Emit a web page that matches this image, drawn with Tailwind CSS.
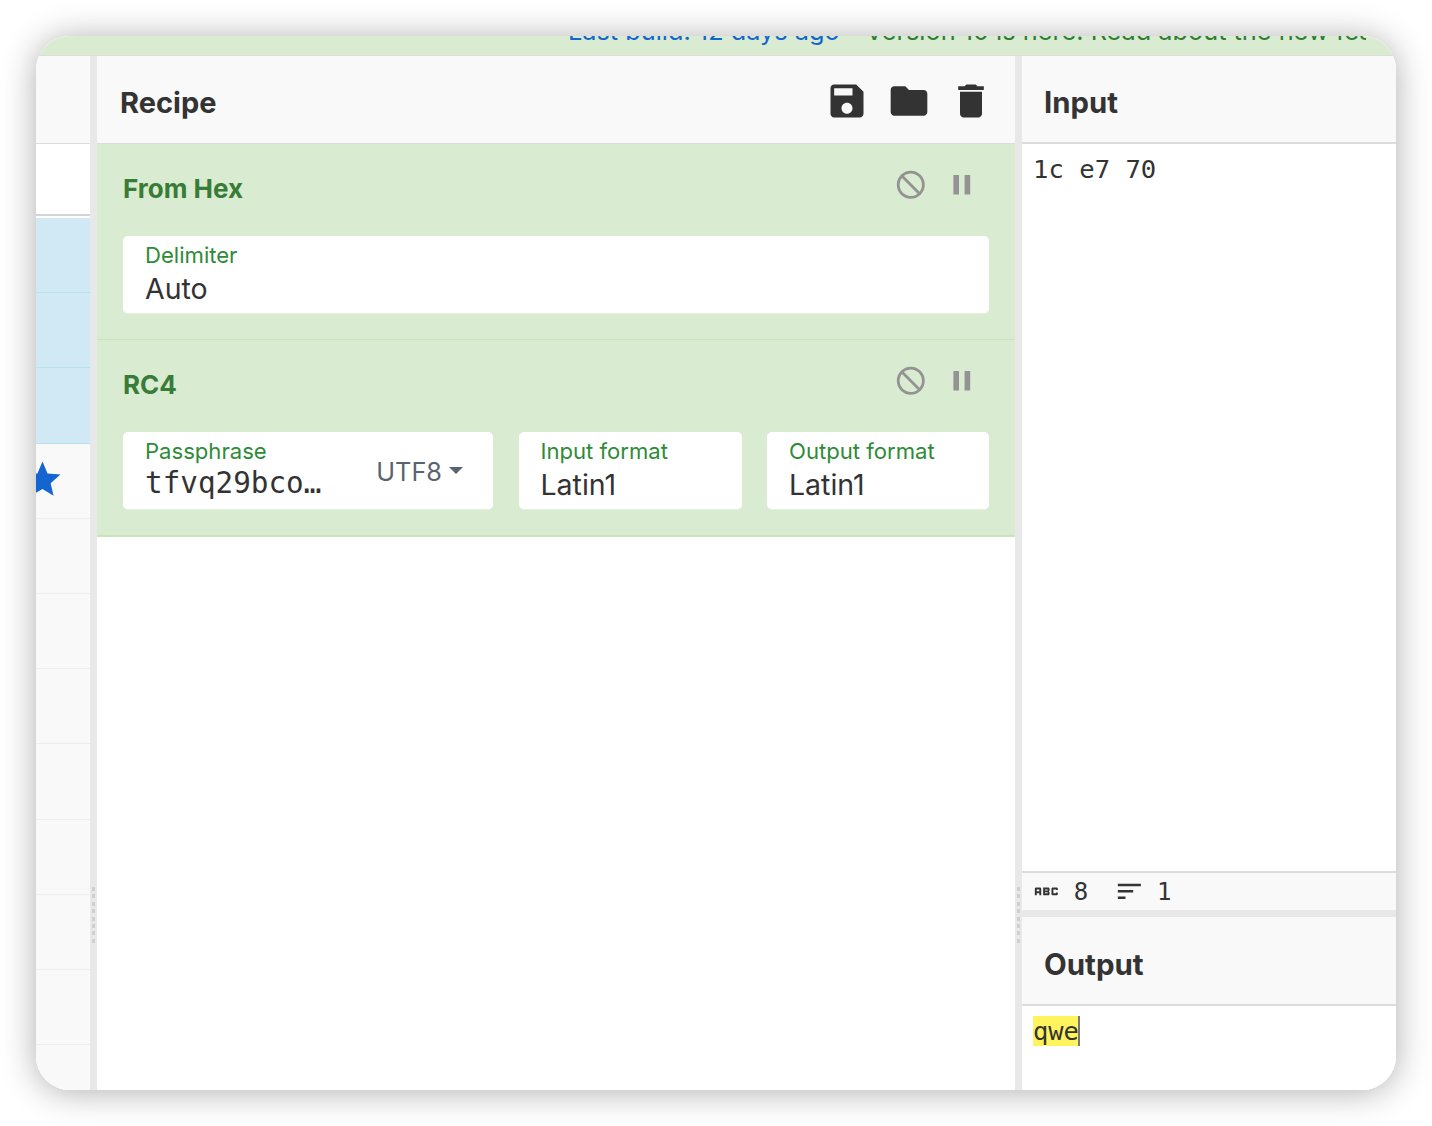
<!DOCTYPE html>
<html>
<head>
<meta charset="utf-8">
<script src="https://cdn.jsdelivr.net/npm/@tailwindcss/browser@4"></script>
</head>
<body class="bg-white">
<div class="h-[1126px] w-[1432px] p-[36px] font-['Inter',sans-serif] text-[#333]">
  <div class="h-full w-full rounded-[34px] shadow-[0_2px_34px_rgba(0,0,0,0.32)]">
  <div class="flex h-full w-full flex-col overflow-hidden rounded-[34px] bg-white">
    <!-- banner -->
    <div class="flex h-[20px] shrink-0 items-end gap-[26px] overflow-hidden whitespace-nowrap border-b border-[#dcdcdc] bg-[#d9ebd0] pb-[10px] pl-[532px] text-[25.3px] leading-[28px]">
      <span class="shrink-0 text-[#1565d0]">Last build: 12 days ago</span>
      <span class="w-[500px] shrink-0 overflow-hidden text-[#2e7d32]">Version 10 is here! Read about the new features</span>
    </div>
    <div class="flex min-h-0 flex-1">
      <!-- operations column -->
      <div class="flex w-[54px] shrink-0 flex-col bg-[#f9f9f9]">
        <div class="h-[88px] shrink-0 border-b border-[#dcdcdc]"></div>
        <div class="h-[72px] shrink-0 border-b-2 border-[#d4d4d4] bg-white"></div>
        <div class="h-[2px] shrink-0 bg-white"></div>
        <div class="h-[75px] shrink-0 border-b border-[#b5e2ee] bg-[#d1e8f5]"></div>
        <div class="h-[75px] shrink-0 border-b border-[#b5e2ee] bg-[#d1e8f5]"></div>
        <div class="h-[76px] shrink-0 border-b border-[#b5e2ee] bg-[#d1e8f5]"></div>
        <div class="flex h-[75px] shrink-0 items-center border-b border-[#eeeeee] pb-[4px]">
          <svg viewBox="0 0 24 24" class="ml-[-15.5px] h-[43px] w-[43px] shrink-0 fill-[#1565d0]"><path d="M12 17.27L18.18 21l-1.64-6.97L22 9.24l-7.19-.61L12 2 9.19 8.63 2 9.24l5.46 4.79L5.82 21z"/></svg>
        </div>
        <div class="h-[75px] shrink-0 border-b border-[#eeeeee]"></div>
        <div class="h-[75px] shrink-0 border-b border-[#eeeeee]"></div>
        <div class="h-[75px] shrink-0 border-b border-[#eeeeee]"></div>
        <div class="h-[76px] shrink-0 border-b border-[#eeeeee]"></div>
        <div class="h-[75px] shrink-0 border-b border-[#eeeeee]"></div>
        <div class="h-[75px] shrink-0 border-b border-[#eeeeee]"></div>
        <div class="h-[75px] shrink-0 border-b border-[#eeeeee]"></div>
      </div>
      <!-- gutter -->
      <div class="relative w-[7px] shrink-0 bg-[#e8e8e8]">
        <div class="absolute left-[2px] top-[831px] flex flex-col gap-[3.4px]">
          <i class="block h-[4px] w-[3px] bg-[#cfcfcf]"></i><i class="block h-[4px] w-[3px] bg-[#cfcfcf]"></i><i class="block h-[4px] w-[3px] bg-[#cfcfcf]"></i><i class="block h-[4px] w-[3px] bg-[#cfcfcf]"></i><i class="block h-[4px] w-[3px] bg-[#cfcfcf]"></i><i class="block h-[4px] w-[3px] bg-[#cfcfcf]"></i><i class="block h-[4px] w-[3px] bg-[#cfcfcf]"></i><i class="block h-[4px] w-[3px] bg-[#cfcfcf]"></i>
        </div>
      </div>
      <!-- recipe -->
      <div class="flex w-[918px] shrink-0 flex-col bg-white">
        <div class="flex h-[88px] shrink-0 items-center justify-between border-b border-[#dcdcdc] bg-[#f9f9f9] pl-[23px] pr-[22px]">
          <span class="pt-[7px] text-[29px] font-bold leading-[34px]">Recipe</span>
          <div class="mt-[2px] flex gap-[18.25px]">
            <svg viewBox="0 0 24 24" class="h-[44px] w-[44px] fill-[#333]"><path d="M17 3H5c-1.11 0-2 .9-2 2v14c0 1.1.89 2 2 2h14c1.1 0 2-.9 2-2V7l-4-4zm-5 16c-1.66 0-3-1.34-3-3s1.34-3 3-3 3 1.34 3 3-1.34 3-3 3zm3-10H5V5h10v4z"/></svg>
            <svg viewBox="0 0 24 24" class="h-[44px] w-[44px] fill-[#333]"><path d="M10 4H4c-1.1 0-1.99.9-1.99 2L2 18c0 1.1.9 2 2 2h16c1.1 0 2-.9 2-2V8c0-1.1-.9-2-2-2h-8l-2-2z"/></svg>
            <svg viewBox="0 0 24 24" class="h-[44px] w-[44px] fill-[#333]"><path d="M6 19c0 1.1.9 2 2 2h8c1.1 0 2-.9 2-2V7H6v12zM19 4h-3.5l-1-1h-5l-1 1H5v2h14V4z"/></svg>
          </div>
        </div>
        <!-- From Hex -->
        <div class="h-[196px] shrink-0 border-b border-[#c9e3bb] bg-[#d9ebd0] px-[26px] pt-[24px]">
          <div class="flex h-[68px] items-start justify-between">
            <span class="mt-[2px] text-[26px] font-bold leading-[38px] text-[#387c37]">From Hex</span>
            <div class="mr-[10px] flex gap-[18px]">
              <svg viewBox="0 0 24 24" class="h-[33.6px] w-[33.6px] -scale-x-100 fill-[#939393]"><path d="M12 2C6.48 2 2 6.48 2 12s4.48 10 10 10 10-4.48 10-10S17.52 2 12 2zM4 12c0-4.42 3.58-8 8-8 1.85 0 3.55.63 4.9 1.69L5.69 16.9C4.63 15.55 4 13.85 4 12zm8 8c-1.85 0-3.55-.63-4.9-1.69L18.31 7.1C19.37 8.45 20 10.15 20 12c0 4.42-3.58 8-8 8z"/></svg>
              <svg viewBox="0 0 24 24" class="h-[33.6px] w-[33.6px] fill-[#939393]"><path d="M6 19h4V5H6v14zm8-14v14h4V5h-4z"/></svg>
            </div>
          </div>
          <div class="h-[78px] rounded-[5px] border-b border-[#e3f0dc] bg-white px-[22px] pt-[5px]">
            <div class="text-[22.1px] leading-[28px] text-[#2e8b37]">Delimiter</div>
            <div class="mt-[3px] text-[28.5px] leading-[34px]">Auto</div>
          </div>
        </div>
        <!-- RC4 -->
        <div class="h-[197px] shrink-0 border-b-2 border-[#c9e3bb] bg-[#d9ebd0] px-[26px] pt-[24px]">
          <div class="flex h-[68px] items-start justify-between">
            <span class="mt-[2px] text-[26px] font-bold leading-[38px] text-[#387c37]">RC4</span>
            <div class="mr-[10px] flex gap-[18px]">
              <svg viewBox="0 0 24 24" class="h-[33.6px] w-[33.6px] -scale-x-100 fill-[#939393]"><path d="M12 2C6.48 2 2 6.48 2 12s4.48 10 10 10 10-4.48 10-10S17.52 2 12 2zM4 12c0-4.42 3.58-8 8-8 1.85 0 3.55.63 4.9 1.69L5.69 16.9C4.63 15.55 4 13.85 4 12zm8 8c-1.85 0-3.55-.63-4.9-1.69L18.31 7.1C19.37 8.45 20 10.15 20 12c0 4.42-3.58 8-8 8z"/></svg>
              <svg viewBox="0 0 24 24" class="h-[33.6px] w-[33.6px] fill-[#939393]"><path d="M6 19h4V5H6v14zm8-14v14h4V5h-4z"/></svg>
            </div>
          </div>
          <div class="flex gap-[25.5px]">
            <div class="flex h-[78px] w-[370px] shrink-0 items-start justify-between rounded-[5px] border-b border-[#e3f0dc] bg-white pl-[22px] pr-[30px] pt-[5px]">
              <div>
                <div class="text-[22.1px] leading-[28px] text-[#2e8b37]">Passphrase</div>
                <div class="mt-[1px] font-['DejaVu_Sans_Mono',monospace] text-[29.3px] leading-[34px]">tfvq29bco…</div>
              </div>
              <div class="mt-[20px] flex items-center gap-[7px]">
                <span class="text-[25.3px] leading-[30px] text-[#5a6370]">UTF8</span>
                <span class="mb-[3px] h-0 w-0 border-x-[7px] border-t-[7px] border-x-transparent border-t-[#5a6370]"></span>
              </div>
            </div>
            <div class="h-[78px] w-[223px] shrink-0 rounded-[5px] border-b border-[#e3f0dc] bg-white px-[22px] pt-[5px]">
              <div class="text-[22.1px] leading-[28px] text-[#2e8b37]">Input format</div>
              <div class="mt-[3px] text-[28.5px] leading-[34px]">Latin1</div>
            </div>
            <div class="h-[78px] w-[222px] shrink-0 rounded-[5px] border-b border-[#e3f0dc] bg-white px-[22px] pt-[5px]">
              <div class="text-[22.1px] leading-[28px] text-[#2e8b37]">Output format</div>
              <div class="mt-[3px] text-[28.5px] leading-[34px]">Latin1</div>
            </div>
          </div>
        </div>
      </div>
      <!-- gutter -->
      <div class="relative w-[7px] shrink-0 bg-[#e8e8e8]">
        <div class="absolute left-[2px] top-[831px] flex flex-col gap-[3.4px]">
          <i class="block h-[4px] w-[3px] bg-[#cfcfcf]"></i><i class="block h-[4px] w-[3px] bg-[#cfcfcf]"></i><i class="block h-[4px] w-[3px] bg-[#cfcfcf]"></i><i class="block h-[4px] w-[3px] bg-[#cfcfcf]"></i><i class="block h-[4px] w-[3px] bg-[#cfcfcf]"></i><i class="block h-[4px] w-[3px] bg-[#cfcfcf]"></i><i class="block h-[4px] w-[3px] bg-[#cfcfcf]"></i><i class="block h-[4px] w-[3px] bg-[#cfcfcf]"></i>
        </div>
      </div>
      <!-- input/output -->
      <div class="flex min-w-0 flex-1 flex-col bg-white">
        <div class="flex h-[88px] shrink-0 items-center border-b-2 border-[#dcdcdc] bg-[#f9f9f9] pl-[22px]">
          <span class="pt-[7px] text-[29.3px] font-bold leading-[34px]">Input</span>
        </div>
        <div class="h-[729px] shrink-0 border-b-2 border-[#dcdcdc] pl-[11px] pt-[9px] font-['DejaVu_Sans_Mono',monospace] text-[25.6px] leading-[32px]">1c e7 70</div>
        <div class="flex h-[37px] shrink-0 items-center bg-[#f9f9f9] font-['DejaVu_Sans_Mono',monospace] text-[24px]">
          <svg viewBox="0 0 24 24" class="ml-[9px] h-[30.7px] w-[30.7px] shrink-0 fill-[#333]"><path d="M21 11h-1.5v-.5h-2v3h2V13H21v1c0 .55-.45 1-1 1h-3c-.55 0-1-.45-1-1v-4c0-.55.45-1 1-1h3c.55 0 1 .45 1 1v1zM8 10v5H6.5v-1.5h-2V15H3v-5c0-.55.45-1 1-1h3c.55 0 1 .45 1 1v1zm-1.5.5h-2V12h2v-1.5zm7 1.5c.55 0 1 .45 1 1v1c0 .55-.45 1-1 1h-4V9h4c.55 0 1 .45 1 1v1c0 .55-.45 1-1 1zM11 10.5v.75h2v-.75h-2zm2 2.25h-2v.75h2v-.75z"/></svg>
          <span class="ml-[12px] w-[14px]">8</span>
          <svg viewBox="0 0 24 24" class="ml-[26.5px] h-[30.7px] w-[30.7px] shrink-0 fill-[#333]"><path d="M3 18h6v-2H3v2zM3 6v2h18V6H3zm0 7h12v-2H3v2z"/></svg>
          <span class="ml-[12px]">1</span>
        </div>
        <div class="h-[7px] shrink-0 bg-[#e8e8e8]"></div>
        <div class="flex h-[89px] shrink-0 items-center border-b-2 border-[#dcdcdc] bg-[#f9f9f9] pl-[22px]">
          <span class="pt-[7px] text-[29.5px] font-bold leading-[34px]">Output</span>
        </div>
        <div class="pl-[11px] pt-[10px] font-['DejaVu_Sans_Mono',monospace] text-[25.4px] leading-[30px]"><span class="inline-block w-[47px] border-r-2 border-[#777] bg-[#fff35e]">qwe</span></div>
      </div>
    </div>
  </div>
  </div>
</div>
</body>
</html>
